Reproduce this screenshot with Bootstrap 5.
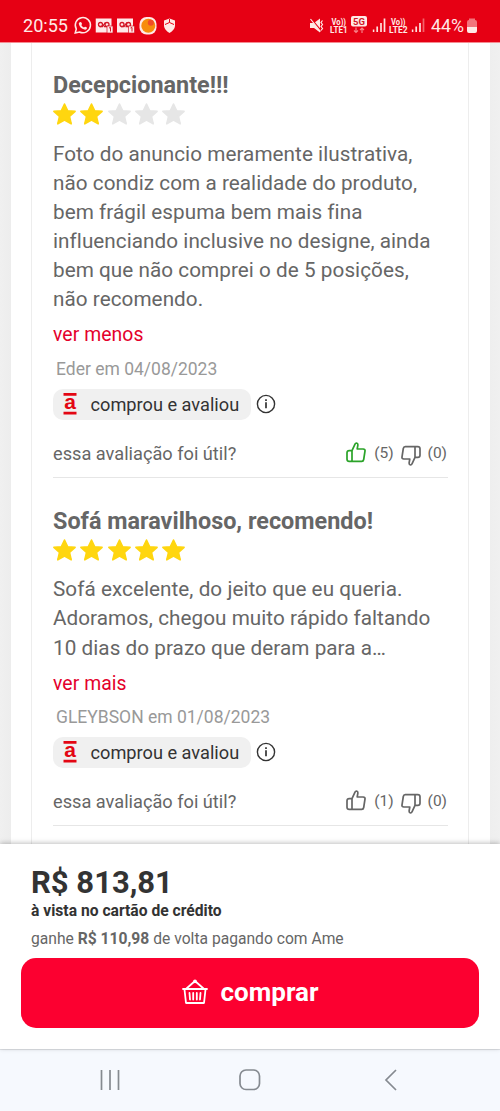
<!DOCTYPE html>
<html lang="pt-BR">
<head>
<meta charset="utf-8">
<meta name="viewport" content="width=device-width, initial-scale=1">
<title>Avaliações</title>
<link href="https://cdn.jsdelivr.net/npm/bootstrap@5.3.0/dist/css/bootstrap.min.css" rel="stylesheet">
<style>
body{font-family:Roboto,"Liberation Sans",sans-serif;color:#666;background:#fff;white-space:nowrap}
.status{height:42px;background:#e60014;color:#ffe9e6;padding:9px 23px 0 23px;box-shadow:0 1px 0 #f58b91;position:relative}
.feed{background:linear-gradient(90deg,#f0f0f0 0,#ededed 11px,#eee 490px,#f0f0f0 500px);padding:0 10px 0 11px;min-height:0}
.panel{background:#fff;padding:0 21px 0 20px}
.reviews{border:solid #ededed;border-width:0 1px;padding:0 20px 0 21px;height:100%}
.review{border-bottom:1px solid #e6e6e6;padding:28px 0 8px}
.title{font-size:23.4px;line-height:30px;font-weight:700;margin:0}
.stars{height:29px;gap:4.35px;color:#ffd60f;padding-bottom:1px}
.off{color:#e6e6e6}
.copy{font-size:20.7px;line-height:29.1px;margin:10.8px 0 0;letter-spacing:.05px}
.more{font-size:19.4px;line-height:30px;margin-top:6px;color:#e4002b;letter-spacing:.05px}
.author{font-size:17.5px;line-height:24px;margin:6.2px 0 0 3px;color:#999}
.bought{height:31px;background:#f0f0f0;border-radius:10px;width:198px;padding-left:10px;gap:13.5px;font-size:18.2px;color:#333}
.label-text{padding-top:1px}
.info-icon{margin-left:5px}
.useful{height:30px;margin-top:19px;font-size:18.2px}
.count{font-size:15.5px;padding-right:1px;gap:7px}
.down{transform:rotate(180deg)}
.up{margin-bottom:3px;margin-right:1px}
.buybar{height:205px;padding:0 21px;box-shadow:0 -1px 5px rgba(0,0,0,.25);position:relative;background:#fff}
.offer{padding-left:10px}
.price{font-size:31px;line-height:38px;font-weight:700;color:#333;padding-top:20px}
.terms{font-size:15.65px;line-height:18px;font-weight:700;color:#333}
.cashback{font-size:15.65px;line-height:20px;margin-top:9px}
.buy{height:70px;border-radius:15px;background:#fc0030;color:#fff;font-size:26px;font-weight:700;margin-top:9px;border:0;gap:13px;padding:0 0 2px}
.buy:hover{background:#e0002b;color:#fff}
.sysnav{height:62px;background:#f6f9fe;border-top:1px solid #dfe2e7;padding:0 99px 2px 100px}
</style>
</head>
<body>
<svg class="d-none">
<symbol id="star" viewBox="0 0 23 22"><path fill="currentColor" stroke="currentColor" stroke-width="1.6" stroke-linejoin="round" d="M11.5 1 14.6 7.7 22.1 8.3 16.5 13.4 18.2 20.8 11.500 17.1 4.800 20.800 6.500 13.400.9 8.300 8.400 7.700Z"/></symbol>
<symbol id="thumb" viewBox="0 0 20 21"><path fill="none" stroke="currentColor" stroke-width="1.7" stroke-linejoin="round" d="M6 8.700 9 2.200Q9.400 1 10.400 1 12.200 1.400 11.800 3.500L11.200 7H17.200Q19.300 7.200 19 9L17.700 17.500Q17.400 19.300 15.700 19.300H3.200Q1 19.300 1 17.200V10.800Q1 8.700 3.200 8.700H6V19"/></symbol>
<symbol id="mark-a" viewBox="0 0 14 22"><path fill="#e30613" d="M.5 0h13v2.700H.5zM.5 18.700h13v2.800H.5z"/><text x="7" y="16.300" text-anchor="middle" font-family="Liberation Sans" font-weight="700" font-size="21" fill="#e30613">a</text></symbol>
<symbol id="info" viewBox="0 0 20 20"><circle cx="10" cy="10" r="8.600" fill="none" stroke="#333" stroke-width="1.400"/><path stroke="#333" stroke-width="1.700" d="M10 5.300v1.800M10 8.300v6"/></symbol>
<symbol id="mail" viewBox="0 0 18 16"><path fill="#ffe9e9" d="M0 1h16v14H0z"/><g fill="none" stroke="#d31626" stroke-width="1.300"><circle cx="5" cy="7" r="2"/><circle cx="11.500" cy="7" r="2"/><path d="M4 9.200h3L10 5M8.500 9.200h3.500"/></g><path fill="#ffe9e9" stroke="#d31626" stroke-width=".7" d="M11.500 8.500h6v7h-6z"/><path d="M13.500 10.500 15 10v4" stroke="#d31626" fill="none"/></symbol>
<symbol id="bars" viewBox="0 0 14 15"><path stroke="#ffe1df" stroke-width="1.700" d="M1 14v-2.500M4.700 14V8.500M8.500 14V5"/></symbol>
</svg>
<div class="d-flex flex-column vh-100 overflow-hidden">
<header class="status d-flex align-items-start flex-shrink-0">
  <svg width="454" height="32" viewBox="23 9 454 32" fill="#ffe9e6" font-family="Roboto">
    <text x="23" y="31.500" font-size="18.500" textLength="45" lengthAdjust="spacingAndGlyphs">20:55</text>
    <path d="M75.200 33 76.300 29A7.600 7.600 0 1 1 79.500 32Z" fill="none" stroke="#ffe9e6" stroke-width="1.500"/>
    <path d="M79.300 22.500q1.500-1.500 2.400.6l.3 1q-.8 1-.5 1.500 1 1.500 2.500 2 .7-1 1.300-.8 2 .7 1.800 1.300-.7 2-2.600 1.500-4.500-1-5.700-5.500-.1-1 .5-1.600Z"/>
    <use href="#mail" x="95.500" y="17.500" width="18" height="16"/><use href="#mail" x="117" y="17.500" width="18" height="16"/>
    <rect x="139.500" y="17" width="17" height="17.500" rx="7"/><circle cx="148.300" cy="25.700" r="7" fill="#f78c0c"/><circle cx="150.800" cy="22.800" r="3" fill="#f14c27"/>
    <path d="M164 20.500 169.500 18.500 175 20.500V26Q174.500 30 169.500 33 164.500 30 164 26Z"/><path d="m165 24.500 4.500-2 4.500 2M169.500 19v3.500" stroke="#e60014" fill="none"/>
    <path d="M310 23h4l6-4.500v14L314 28h-4Z"/><path d="M311 18.500 322 32" stroke="#e60014" stroke-width="1.500"/><path d="m310.500 19 10 12.500M322.500 20.500l-1.500 2 1.500 2-1.500 2 1.500 2-1.500 2" stroke="#ffe9e6" fill="none" stroke-width="1.200"/>
    <g font-size="8.500" font-weight="700"><text x="331.500" y="24.500" textLength="14.500" lengthAdjust="spacingAndGlyphs">Vo))</text><text x="330" y="32.500" textLength="17.500" lengthAdjust="spacingAndGlyphs">LTE1</text><text x="391" y="24.500" textLength="14.500" lengthAdjust="spacingAndGlyphs">Vo))</text><text x="389" y="32.500" textLength="18.500" lengthAdjust="spacingAndGlyphs">LTE2</text></g>
    <rect x="351" y="16" width="16" height="10.500" rx="2"/><text x="353" y="24.700" font-size="9.500" font-weight="700" fill="#d31626" textLength="12">5G</text>
    <path d="M356 27.500v5m-2-2 2 2 2-2M362 33v-5m-2 2 2-2 2 2" fill="none" stroke="#f78088" stroke-width="1.200"/>
    <use href="#bars" x="372.500" y="18" width="14" height="15"/><path d="M384.500 18.500V32" stroke="#ffe1df" stroke-width="1.700"/>
    <use href="#bars" x="411.500" y="18" width="14" height="15"/><path d="M423.500 18.500V32" stroke="#f2646c" stroke-width="1.700"/>
    <text x="431" y="31.500" font-size="18.500" textLength="33" lengthAdjust="spacingAndGlyphs">44%</text>
    <path fill="#f2747c" d="M467 22q0-2 2-2v-1.500h6V20q2 0 2 2v5h-10Z"/><path d="M467 27h10V31q0 2-2 2h-6q-2 0-2-2Z"/>
  </svg>
</header>
<main class="feed flex-grow-1 overflow-hidden">
  <div class="panel h-100"><div class="reviews">
    <article class="review">
      <h2 class="title">Decepcionante!!!</h2>
      <div class="stars d-flex align-items-center"><svg width="23" height="22"><use href="#star"/></svg><svg width="23" height="22"><use href="#star"/></svg><svg class="off" width="23" height="22"><use href="#star"/></svg><svg class="off" width="23" height="22"><use href="#star"/></svg><svg class="off" width="23" height="22"><use href="#star"/></svg></div>
      <p class="copy">Foto do anuncio meramente ilustrativa,<br>não condiz com a realidade do produto,<br>bem frágil espuma bem mais fina<br>influenciando inclusive no designe, ainda<br>bem que não comprei o de 5 posições,<br>não recomendo.</p>
      <div class="more">ver menos</div>
      <div class="author">Eder em 04/08/2023</div>
      <div class="d-flex align-items-center mt-2"><div class="bought d-flex align-items-center"><svg width="14" height="22"><use href="#mark-a"/></svg><span class="label-text">comprou e avaliou</span></div><svg width="20" height="20" class="info-icon"><use href="#info"/></svg></div>
      <div class="useful d-flex align-items-center"><span>essa avaliação foi útil?</span><span class="count d-flex align-items-center ms-auto"><svg width="20" height="21" class="up" color="#2ba329"><use href="#thumb"/></svg><span>(5)</span><svg width="20" height="21" class="mt-1 down"><use href="#thumb"/></svg><span>(0)</span></span></div>
    </article>
    <article class="review">
      <h2 class="title">Sofá maravilhoso, recomendo!</h2>
      <div class="stars d-flex align-items-center"><svg width="23" height="22"><use href="#star"/></svg><svg width="23" height="22"><use href="#star"/></svg><svg width="23" height="22"><use href="#star"/></svg><svg width="23" height="22"><use href="#star"/></svg><svg width="23" height="22"><use href="#star"/></svg></div>
      <p class="copy">Sofá excelente, do jeito que eu queria.<br>Adoramos, chegou muito rápido faltando<br>10 dias do prazo que deram para a…</p>
      <div class="more">ver mais</div>
      <div class="author">GLEYBSON em 01/08/2023</div>
      <div class="d-flex align-items-center mt-2"><div class="bought d-flex align-items-center"><svg width="14" height="22"><use href="#mark-a"/></svg><span class="label-text">comprou e avaliou</span></div><svg width="20" height="20" class="info-icon"><use href="#info"/></svg></div>
      <div class="useful d-flex align-items-center"><span>essa avaliação foi útil?</span><span class="count d-flex align-items-center ms-auto"><svg width="20" height="21" class="up"><use href="#thumb"/></svg><span>(1)</span><svg width="20" height="21" class="mt-1 down"><use href="#thumb"/></svg><span>(0)</span></span></div>
    </article>
  </div></div>
</main>
<section class="buybar flex-shrink-0">
  <div class="offer"><div class="price">R$ 813,81</div><div class="terms">à vista no cartão de crédito</div><div class="cashback">ganhe <b>R$ 110,98</b> de volta pagando com Ame</div></div>
  <button class="buy btn w-100 d-flex align-items-center justify-content-center"><svg width="26" height="26" viewBox="0 0 26 26" fill="none" stroke="#fff" stroke-width="1.800" stroke-linejoin="round" stroke-linecap="round"><path d="M1 10h24M2.500 10.500 4 24h18l1.500-13.500M4.500 9.500 13 2l8.500 7.500M7.500 14l.5 6.500M11.200 14v6.500M14.800 14v6.500M18.500 14l-.5 6.500"/><circle cx="13" cy="2.300" r="1" fill="#fff"/></svg><span>comprar</span></button>
</section>
<nav class="sysnav d-flex align-items-center justify-content-between flex-shrink-0">
  <svg width="20" height="20" stroke="#858a90" stroke-width="1.700"><path d="M1.500 0v20M10 0v20M18.500 0v20"/></svg>
  <svg width="22" height="22" class="me-1"><rect x="1" y="1" width="19.500" height="19.500" rx="6" fill="none" stroke="#858a90" stroke-width="1.700"/></svg>
  <svg width="18" height="22" fill="none" stroke="#858a90" stroke-width="1.700"><path d="M13 1 3 11l10 10"/></svg>
</nav>
</div>
<script src="https://cdn.jsdelivr.net/npm/bootstrap@5.3.0/dist/js/bootstrap.bundle.min.js"></script>
</body>
</html>
